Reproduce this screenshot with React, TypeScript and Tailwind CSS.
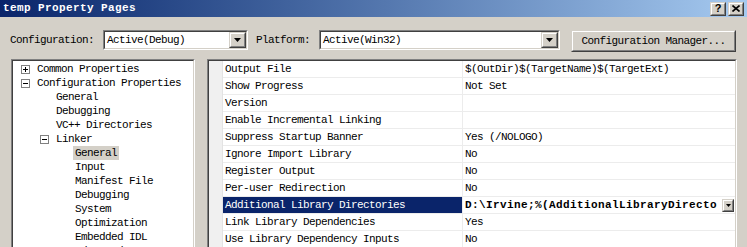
import React from "react"

const mono = "font-['Liberation_Mono','DejaVu_Sans_Mono',monospace] text-[11px] tracking-[-0.6px] leading-none text-black"
const monoBold = "font-['Liberation_Mono','DejaVu_Sans_Mono',monospace] text-[11px] font-bold tracking-[0.4px] leading-none"

const Raised: React.FC<{ className?: string; children?: React.ReactNode }> = ({ className = "", children }) => (
  <div className={`border border-t-[#d4d0c8] border-l-[#d4d0c8] border-r-[#404040] border-b-[#404040] bg-[#d4d0c8] ${className}`}>
    <div className="w-full h-full border border-t-white border-l-white border-r-[#808080] border-b-[#808080] flex items-center justify-center">
      {children}
    </div>
  </div>
)

const Sunken: React.FC<{ className?: string; children?: React.ReactNode }> = ({ className = "", children }) => (
  <div className={`border border-t-[#808080] border-l-[#808080] border-r-white border-b-white ${className}`}>
    <div className="w-full h-full border border-t-[#404040] border-l-[#404040] border-r-[#d4d0c8] border-b-[#d4d0c8] bg-white overflow-hidden">
      {children}
    </div>
  </div>
)

const Arrow = ({ small }: { small?: boolean }) =>
  small ? (
    <svg width="5" height="3" viewBox="0 0 5 3">
      <path d="M0 0h5L2.5 3z" fill="#000" />
    </svg>
  ) : (
    <svg width="7" height="4" viewBox="0 0 7 4">
      <path d="M0 0h7L3.5 4z" fill="#000" />
    </svg>
  )

const Combo = ({ width, value }: { width: string; value: string }) => (
  <Sunken className={`${width} h-[20px]`}>
    <div className="flex items-center h-full">
      <span className={`${mono} flex-1 pl-[2px]`}>{value}</span>
      <Raised className="w-[17px] h-[16px]">
        <Arrow />
      </Raised>
    </div>
  </Sunken>
)

const ExpandBox = ({ open }: { open: boolean }) => (
  <svg width="9" height="9" viewBox="0 0 9 9" className="shrink-0">
    <rect x="0.5" y="0.5" width="8" height="8" fill="#fff" stroke="#808080" />
    <path d="M2 4.5h5" stroke="#000" />
    {!open && <path d="M4.5 2v5" stroke="#000" />}
  </svg>
)

type TreeItem = { label: string; level: 0 | 1 | 2; box?: "+" | "-"; selected?: boolean }

const treeItems: TreeItem[] = [
  { label: "Common Properties", level: 0, box: "+" },
  { label: "Configuration Properties", level: 0, box: "-" },
  { label: "General", level: 1 },
  { label: "Debugging", level: 1 },
  { label: "VC++ Directories", level: 1 },
  { label: "Linker", level: 1, box: "-" },
  { label: "General", level: 2, selected: true },
  { label: "Input", level: 2 },
  { label: "Manifest File", level: 2 },
  { label: "Debugging", level: 2 },
  { label: "System", level: 2 },
  { label: "Optimization", level: 2 },
  { label: "Embedded IDL", level: 2 },
  { label: "Advanced", level: 2 },
]

const indent = ["pl-[8px]", "pl-[27px]", "pl-[46px]"]

const props: { name: string; value: string; selected?: boolean }[] = [
  { name: "Output File", value: "$(OutDir)$(TargetName)$(TargetExt)" },
  { name: "Show Progress", value: "Not Set" },
  { name: "Version", value: "" },
  { name: "Enable Incremental Linking", value: "" },
  { name: "Suppress Startup Banner", value: "Yes (/NOLOGO)" },
  { name: "Ignore Import Library", value: "No" },
  { name: "Register Output", value: "No" },
  { name: "Per-user Redirection", value: "No" },
  { name: "Additional Library Directories", value: "D:\\Irvine;%(AdditionalLibraryDirecto", selected: true },
  { name: "Link Library Dependencies", value: "Yes" },
  { name: "Use Library Dependency Inputs", value: "No" },
]

export default function App() {
  return (
    <div className="w-[747px] h-[247px] overflow-hidden bg-[#d4d0c8] flex flex-col">
      {/* title bar */}
      <div className="h-[17px] shrink-0 flex items-center bg-gradient-to-r from-[#0a246a] to-[#a6caf0] pl-[3px] pr-[3px]">
        <span className={`${monoBold} text-white flex-1`}>temp Property Pages</span>
        <Raised className="w-[16px] h-[14px]">
          <span className="font-['Liberation_Sans',sans-serif] text-[11px] font-bold leading-none">?</span>
        </Raised>
        <Raised className="w-[16px] h-[14px] ml-[2px]">
          <svg width="8" height="7" viewBox="0 0 8 7">
            <path d="M0.5 0.5l7 6M7.5 0.5l-7 6" stroke="#000" strokeWidth="1.6" />
          </svg>
        </Raised>
      </div>

      {/* configuration row */}
      <div className="h-[42px] shrink-0 flex items-start pt-[13px] pl-[10px]">
        <div className="h-[20px] flex items-center">
          <span className={mono}>Configuration:</span>
        </div>
        <div className="ml-[9px]">
          <Combo width="w-[145px]" value="Active(Debug)" />
        </div>
        <div className="h-[20px] flex items-center ml-[8px]">
          <span className={mono}>Platform:</span>
        </div>
        <div className="ml-[9px]">
          <Combo width="w-[241px]" value="Active(Win32)" />
        </div>
        <Raised className="ml-[11px] w-[165px] h-[22px]">
          <span className={mono}>Configuration Manager...</span>
        </Raised>
      </div>

      {/* panels */}
      <div className="flex items-start pl-[11px]">
        <Sunken className="w-[184px] h-[240px]">
          <div className="pt-[1px]">
            {treeItems.map((item, i) => (
              <div key={i} className={`h-[14px] flex items-center ${indent[item.level]}`}>
                {item.box ? <ExpandBox open={item.box === "-"} /> : <div className="w-[9px] shrink-0" />}
                <span
                  className={`${mono} ml-[5px] px-[2px] h-[14px] flex items-center ${item.selected ? "bg-[#d4d0c8]" : ""}`}
                >
                  {item.label}
                </span>
              </div>
            ))}
          </div>
        </Sunken>

        <Sunken className="ml-[12px] w-[530px] h-[240px]">
          <div className="flex h-full">
            <div className="w-[14px] shrink-0 bg-[#f0f0f0] border-r border-[#e3e3e3]" />
            <div className="flex-1">
              {props.map((p, i) => (
                <div key={i} className="h-[17px] flex border-b border-[#ececec]">
                  <div
                    className={`w-[240px] shrink-0 flex items-center pl-[2px] border-r border-[#ececec] ${
                      p.selected ? "bg-[#0a246a]" : ""
                    }`}
                  >
                    <span className={`${mono} ${p.selected ? "text-white" : ""}`}>{p.name}</span>
                  </div>
                  <div className="flex-1 flex items-center pl-[2px] min-w-0">
                    {p.selected ? (
                      <>
                        <span className={`${monoBold} text-black flex-1 whitespace-nowrap overflow-hidden`}>{p.value}</span>
                        <Raised className="w-[12px] h-[13px] mr-[1px] shrink-0">
                          <Arrow small />
                        </Raised>
                      </>
                    ) : (
                      <span className={mono}>{p.value}</span>
                    )}
                  </div>
                </div>
              ))}
            </div>
          </div>
        </Sunken>
      </div>
    </div>
  )
}
